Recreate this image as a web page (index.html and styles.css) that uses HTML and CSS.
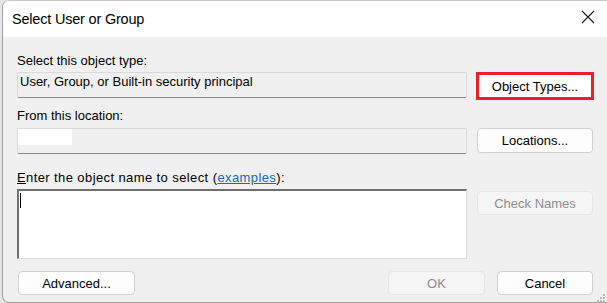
FILE: index.html
```html
<!DOCTYPE html>
<html>
<head>
<meta charset="utf-8">
<link rel="stylesheet" href="styles.css">
</head>
<body>
<div class="window">
  <div class="titlebar">
    <span class="title">Select User or Group</span>
    <svg class="close" width="14" height="14" viewBox="0 0 14 14"><path d="M1 1 L13 13 M13 1 L1 13" stroke="#1a1a1a" stroke-width="1.1" fill="none"/></svg>
  </div>
  <div class="content">
    <div class="label l1">Select this object type:</div>
    <div class="row r1">
      <div class="field">User, Group, or Built-in security principal</div>
      <button class="btn btn-hl">Object Types...</button>
    </div>
    <div class="label l2">From this location:</div>
    <div class="row r2">
      <div class="field"><span class="redact"></span></div>
      <button class="btn">Locations...</button>
    </div>
    <div class="label l3"><u>E</u>nter the object name to select (<a class="link">examples</a>):</div>
    <div class="row r3">
      <div class="entry"><span class="caret"></span></div>
      <button class="btn btn-dis btn-check">Check Names</button>
    </div>
    <div class="actions">
      <button class="btn btn-adv">Advanced...</button>
      <div class="spacer"></div>
      <button class="btn btn-dis btn-ok">OK</button>
      <button class="btn btn-cancel">Cancel</button>
    </div>
  </div>
  <svg class="grip" width="10" height="10" viewBox="0 0 10 10">
    <rect x="7" y="1" width="2" height="2" fill="#b8b8b8"/>
    <rect x="4" y="4" width="2" height="2" fill="#b8b8b8"/>
    <rect x="7" y="4" width="2" height="2" fill="#b8b8b8"/>
    <rect x="1" y="7" width="2" height="2" fill="#b8b8b8"/>
    <rect x="4" y="7" width="2" height="2" fill="#b8b8b8"/>
    <rect x="7" y="7" width="2" height="2" fill="#b8b8b8"/>
  </svg>
</div>
</body>
</html>
```
FILE: styles.css
```css
html, body {
  margin: 0;
  padding: 0;
  width: 607px;
  height: 303px;
  overflow: hidden;
  background: #e6e6e6;
}
.window {
  position: relative;
  margin-left: 2px;
  width: 610px;
  height: 303px;
  box-sizing: border-box;
  border-left: 1px solid #a3a3a3;
  border-bottom: 1px solid #a3a3a3;
  border-top: 1px solid #c8c8c8;
  border-radius: 7px 7px 0 7px;
  background: #f0f0f0;
  overflow: hidden;
  font-family: "Liberation Sans", Arial, sans-serif;
  font-size: 13px;
  color: #000;
}
.titlebar {
  height: 36px;
  background: #fff;
  display: flex;
  align-items: center;
  padding-left: 9px;
  position: relative;
}
.title {
  font-family: "Liberation Sans", Arial, sans-serif;
  font-size: 14.5px;
  letter-spacing: -0.2px;
  color: #000;
  margin-top: -1px;
}
.close {
  position: absolute;
  left: 578px;
  top: 9px;
}
.content {
  display: flex;
  flex-direction: column;
  padding-left: 14px;
}
.label {
  height: 15px;
  line-height: 15px;
  white-space: nowrap;
}
.l1 { margin-top: 16px; }
.l2 { margin-top: 8px; }
.l3 { margin-top: 16px; letter-spacing: 0.4px; }
.link {
  color: #1a64c8;
  text-decoration: underline;
}
.row {
  display: flex;
  align-items: flex-start;
  gap: 10px;
}
.r1 { margin-top: 4px; }
.r2 { margin-top: 5px; }
.r3 { margin-top: 4px; }
.field {
  position: relative;
  width: 450px;
  height: 26px;
  box-sizing: border-box;
  border: 1px solid #dadada;
  border-bottom-color: #8a8a8a;
  border-radius: 2px;
  line-height: 18px;
  padding-left: 2px;
  white-space: nowrap;
}
.redact {
  position: absolute;
  left: 0;
  top: 0;
  width: 54px;
  height: 16px;
  background: #fff;
}
.entry {
  position: relative;
  width: 450px;
  height: 70px;
  box-sizing: border-box;
  background: #fff;
  border-top: 2px solid #707070;
  border-left: 2px solid #707070;
  border-right: 1px solid #dcdcdc;
  border-bottom: 1px solid #dcdcdc;
}
.caret {
  position: absolute;
  left: 1px;
  top: 2px;
  width: 1px;
  height: 15px;
  background: #000;
}
.btn {
  font-family: "Liberation Sans", Arial, sans-serif;
  font-size: 13px;
  color: #000;
  background: #fdfdfd;
  border: 1px solid #d0d0d0;
  border-radius: 4px;
  width: 116px;
  height: 25px;
  padding: 0;
  margin: 0;
  box-sizing: border-box;
}
.btn-hl {
  width: 118px;
  height: 28px;
  margin-left: -1px;
  border: 3px solid #e8202a;
  border-radius: 0;
  background: #fff;
}
.btn-dis {
  background: #f5f5f5;
  border-color: #e6e6e6;
  color: #8d8d8d;
}
.btn-check {
  margin-top: 2px;
  height: 24px;
}
.actions {
  display: flex;
  margin-top: 12px;
  gap: 12px;
}
.btn-adv {
  margin-left: 1px;
  width: 117px;
  height: 24px;
}
.spacer { flex: 1; }
.btn-ok {
  width: 97px;
  height: 24px;
}
.btn-cancel {
  width: 96px;
  height: 24px;
  margin-right: 19px;
}
.grip {
  position: absolute;
  left: 593px;
  top: 292px;
}
```
